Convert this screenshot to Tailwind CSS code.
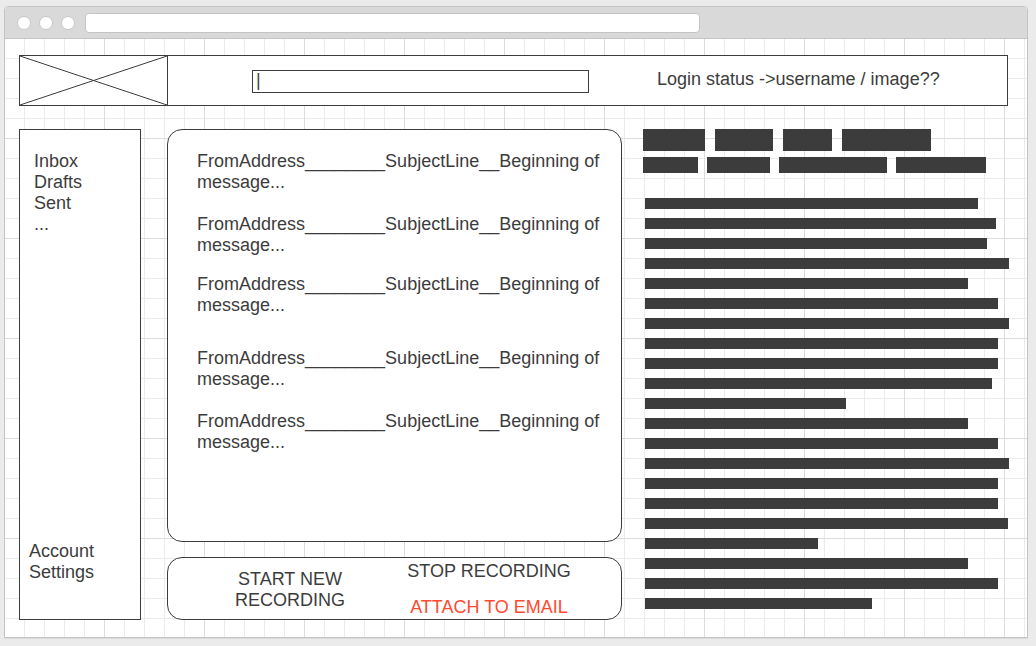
<!DOCTYPE html>
<html lang="en">
<head>
<meta charset="utf-8">
<meta name="viewport" content="width=device-width, initial-scale=1">
<title>Mail wireframe</title>
<script src="https://cdn.jsdelivr.net/npm/@tailwindcss/browser@4"></script>
</head>
<body class="flex min-h-screen flex-col bg-[#ebebeb] pt-1.5 pr-2 pb-2 pl-1 font-['Liberation_Sans',Arial,sans-serif] text-[18px] leading-[21px] text-[#3c3c3c]">
<div class="flex grow flex-col overflow-hidden rounded-t-[4px] border border-[#c4c4c4] bg-white shadow-[0_1px_0_#dcdcdc]">
  <div class="flex h-8 shrink-0 items-center gap-2 border-b border-[#c4c4c4] bg-[#d9d9d9] pl-3">
    <span class="size-3.5 rounded-full border border-[#c8c8c8] bg-white"></span>
    <span class="size-3.5 rounded-full border border-[#c8c8c8] bg-white"></span>
    <span class="size-3.5 rounded-full border border-[#c8c8c8] bg-white"></span>
    <input type="text" aria-label="Address" class="ml-0.5 h-5 w-[615px] rounded-[4px] border border-[#c4c4c4] bg-white px-2 text-sm outline-none">
  </div>

  <div class="flex grow flex-col gap-[23px] pt-4 pr-[18px] pb-[17px] pl-3.5 bg-[linear-gradient(to_right,transparent_99px,#dcdcdc_99px),linear-gradient(to_bottom,transparent_99px,#dcdcdc_99px),linear-gradient(to_right,transparent_19px,#ebebeb_19px),linear-gradient(to_bottom,transparent_19px,#ebebeb_19px)] bg-[length:100px_100px,100px_100px,20px_20px,20px_20px]">
    <header class="mr-px flex items-start border border-[#3c3c3c] bg-white">
      <svg class="h-[49px] w-[148px] shrink-0 border-r border-[#3c3c3c]" viewBox="0 0 147 49" preserveAspectRatio="none" fill="none" stroke="#3c3c3c" stroke-width="1" role="img" aria-label="Logo">
        <path d="M0 0 147 49M147 0 0 49"/>
      </svg>
      <input type="text" aria-label="Search" value="|" class="mt-3.5 ml-[84px] h-[23px] w-[337px] border border-[#3c3c3c] bg-white pr-1 pb-0.5 pl-[3px] outline-none">
      <p class="mt-[13px] ml-[68px] whitespace-nowrap">Login status -&gt;username / image??</p>
    </header>

    <div class="flex grow">
      <nav class="mr-[26px] flex w-[122px] shrink-0 flex-col justify-between border border-[#3c3c3c] bg-white pt-[21px] pb-9">
        <div class="flex flex-col pl-3.5">
          <a href="#">Inbox</a>
          <a href="#">Drafts</a>
          <a href="#">Sent</a>
          <a href="#">...</a>
        </div>
        <a href="#" class="w-24 pl-[9px]">Account Settings</a>
      </nav>

      <main class="mr-[21px] flex flex-[455] flex-col gap-[15px]">
        <section class="flex grow flex-col rounded-[15px] border border-[#3c3c3c] bg-white pt-[21px] pr-2 pl-[29px]">
          <a href="#" class="mb-[21px]">FromAddress________SubjectLine__Beginning of message...</a>
          <a href="#" class="mb-[18px]">FromAddress________SubjectLine__Beginning of message...</a>
          <a href="#" class="mb-8">FromAddress________SubjectLine__Beginning of message...</a>
          <a href="#" class="mb-[21px]">FromAddress________SubjectLine__Beginning of message...</a>
          <a href="#">FromAddress________SubjectLine__Beginning of message...</a>
        </section>
        <section class="flex h-[63px] shrink-0 items-start rounded-[15px] border border-[#3c3c3c] bg-white pl-[62px]">
          <button type="button" class="mt-[11px] w-[120px] text-center">START NEW RECORDING</button>
          <div class="ml-[49px] flex w-[180px] flex-col gap-[15px] pt-[3px]">
            <button type="button" class="whitespace-nowrap text-center">STOP RECORDING</button>
            <button type="button" class="whitespace-nowrap text-center text-[#ff4a32]">ATTACH TO EMAIL</button>
          </div>
        </section>
      </main>

      <aside class="min-w-0 flex-[366]" aria-label="Message preview">
        <div class="mb-1.5 flex h-[22px] gap-2.5">
          <div class="w-[62px] bg-[#3c3c3c]"></div>
          <div class="w-[58px] bg-[#3c3c3c]"></div>
          <div class="w-[49px] bg-[#3c3c3c]"></div>
          <div class="w-[89px] bg-[#3c3c3c]"></div>
        </div>
        <div class="mb-[25px] flex h-4 gap-[9px]">
          <div class="w-[55px] bg-[#3c3c3c]"></div>
          <div class="w-[63px] bg-[#3c3c3c]"></div>
          <div class="w-[108px] bg-[#3c3c3c]"></div>
          <div class="w-[90px] bg-[#3c3c3c]"></div>
        </div>
        <div class="flex flex-col gap-[9px] pl-0.5">
          <div class="h-[11px] w-[333px] bg-[#3c3c3c]"></div>
          <div class="h-[11px] w-[351px] bg-[#3c3c3c]"></div>
          <div class="h-[11px] w-[342px] bg-[#3c3c3c]"></div>
          <div class="h-[11px] w-[364px] bg-[#3c3c3c]"></div>
          <div class="h-[11px] w-[323px] bg-[#3c3c3c]"></div>
          <div class="h-[11px] w-[353px] bg-[#3c3c3c]"></div>
          <div class="h-[11px] w-[364px] bg-[#3c3c3c]"></div>
          <div class="h-[11px] w-[353px] bg-[#3c3c3c]"></div>
          <div class="h-[11px] w-[353px] bg-[#3c3c3c]"></div>
          <div class="h-[11px] w-[347px] bg-[#3c3c3c]"></div>
          <div class="h-[11px] w-[201px] bg-[#3c3c3c]"></div>
          <div class="h-[11px] w-[323px] bg-[#3c3c3c]"></div>
          <div class="h-[11px] w-[353px] bg-[#3c3c3c]"></div>
          <div class="h-[11px] w-[364px] bg-[#3c3c3c]"></div>
          <div class="h-[11px] w-[353px] bg-[#3c3c3c]"></div>
          <div class="h-[11px] w-[353px] bg-[#3c3c3c]"></div>
          <div class="h-[11px] w-[363px] bg-[#3c3c3c]"></div>
          <div class="h-[11px] w-[173px] bg-[#3c3c3c]"></div>
          <div class="h-[11px] w-[323px] bg-[#3c3c3c]"></div>
          <div class="h-[11px] w-[353px] bg-[#3c3c3c]"></div>
          <div class="h-[11px] w-[227px] bg-[#3c3c3c]"></div>
        </div>
      </aside>
    </div>
  </div>
</div>
</body>
</html>
